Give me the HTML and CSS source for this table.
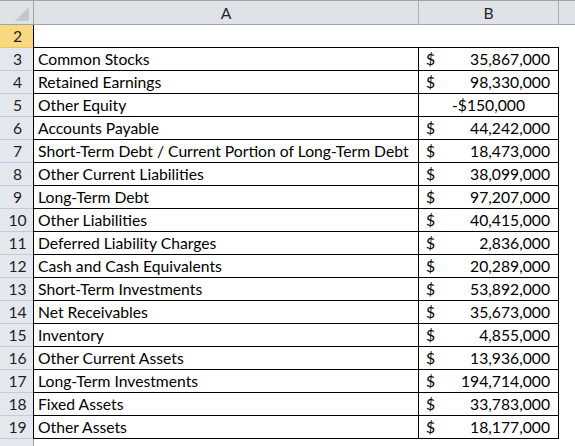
FILE: index.html
```html
<!DOCTYPE html>
<html>
<head>
<meta charset="utf-8">
<link rel="stylesheet" href="styles.css">
</head>
<body>
<div class="sheet">
  <div class="row hdr-row">
    <div class="rh corner"><span class="tri"></span></div>
    <div class="ch colA">A</div>
    <div class="ch colB">B</div>
    <div class="ch colC"></div>
  </div>
  <div class="row r2">
    <div class="rh sel">2</div>
    <div class="c colA top"></div>
    <div class="c colB top"></div>
    <div class="c colC"></div>
  </div>
  <div class="row"><div class="rh">3</div><div class="c colA t">Common Stocks</div><div class="c colB t acc"><span>$</span><span>35,867,000</span></div><div class="c colC"></div></div>
  <div class="row"><div class="rh">4</div><div class="c colA t">Retained Earnings</div><div class="c colB t acc"><span>$</span><span>98,330,000</span></div><div class="c colC"></div></div>
  <div class="row"><div class="rh">5</div><div class="c colA t">Other Equity</div><div class="c colB t ctr">-$150,000</div><div class="c colC"></div></div>
  <div class="row"><div class="rh">6</div><div class="c colA t">Accounts Payable</div><div class="c colB t acc"><span>$</span><span>44,242,000</span></div><div class="c colC"></div></div>
  <div class="row"><div class="rh">7</div><div class="c colA t">Short-Term Debt / Current Portion of Long-Term Debt</div><div class="c colB t acc"><span>$</span><span>18,473,000</span></div><div class="c colC"></div></div>
  <div class="row"><div class="rh">8</div><div class="c colA t">Other Current Liabilities</div><div class="c colB t acc"><span>$</span><span>38,099,000</span></div><div class="c colC"></div></div>
  <div class="row"><div class="rh">9</div><div class="c colA t">Long-Term Debt</div><div class="c colB t acc"><span>$</span><span>97,207,000</span></div><div class="c colC"></div></div>
  <div class="row"><div class="rh">10</div><div class="c colA t">Other Liabilities</div><div class="c colB t acc"><span>$</span><span>40,415,000</span></div><div class="c colC"></div></div>
  <div class="row"><div class="rh">11</div><div class="c colA t">Deferred Liability Charges</div><div class="c colB t acc"><span>$</span><span>2,836,000</span></div><div class="c colC"></div></div>
  <div class="row"><div class="rh">12</div><div class="c colA t">Cash and Cash Equivalents</div><div class="c colB t acc"><span>$</span><span>20,289,000</span></div><div class="c colC"></div></div>
  <div class="row"><div class="rh">13</div><div class="c colA t">Short-Term Investments</div><div class="c colB t acc"><span>$</span><span>53,892,000</span></div><div class="c colC"></div></div>
  <div class="row"><div class="rh">14</div><div class="c colA t">Net Receivables</div><div class="c colB t acc"><span>$</span><span>35,673,000</span></div><div class="c colC"></div></div>
  <div class="row"><div class="rh">15</div><div class="c colA t">Inventory</div><div class="c colB t acc"><span>$</span><span>4,855,000</span></div><div class="c colC"></div></div>
  <div class="row"><div class="rh">16</div><div class="c colA t">Other Current Assets</div><div class="c colB t acc"><span>$</span><span>13,936,000</span></div><div class="c colC"></div></div>
  <div class="row"><div class="rh">17</div><div class="c colA t">Long-Term Investments</div><div class="c colB t acc"><span>$</span><span>194,714,000</span></div><div class="c colC"></div></div>
  <div class="row"><div class="rh">18</div><div class="c colA t">Fixed Assets</div><div class="c colB t acc"><span>$</span><span>33,783,000</span></div><div class="c colC"></div></div>
  <div class="row"><div class="rh">19</div><div class="c colA t">Other Assets</div><div class="c colB t acc"><span>$</span><span>18,177,000</span></div><div class="c colC"></div></div>
  <div class="row"><div class="rh"></div><div class="c colA"></div><div class="c colB"></div><div class="c colC"></div></div>
</div>
</body>
</html>
```
FILE: styles.css
```css
html, body {
  margin: 0;
  padding: 0;
  background: #ffffff;
  overflow: hidden;
}
.sheet {
  width: 575px;
  height: 446px;
  overflow: hidden;
  font-family: Lato, "Open Sans", sans-serif;
  font-size: 15.7px;
  color: #000;
}
.row {
  display: grid;
  grid-template-columns: 34px 385px 140px 60px;
  height: 23px;
}
.hdr-row {
  height: 25px;
  border-top: 1px solid #9ea4ab;
  box-sizing: border-box;
}
.rh {
  background: #e4e8ee;
  border-right: 1px solid #9ea4ab;
  border-bottom: 1px solid #c5cbd2;
  color: #1f1f1f;
  display: flex;
  align-items: center;
  justify-content: center;
  padding-left: 2px;
  box-sizing: border-box;
}
.corner {
  position: relative;
  background: #dfe3e8;
  border-bottom: 1px solid #9ea4ab;
}
.tri {
  position: absolute;
  right: 4px;
  bottom: 3px;
  width: 0;
  height: 0;
  border-left: 14px solid transparent;
  border-bottom: 14px solid #c3c8ce;
}
.sel {
  background: #f9d87f;
  border-bottom: 1px solid #f2c25c;
}
.ch {
  background: #dfe3e8;
  border-right: 1px solid #a9afb6;
  border-bottom: 1px solid #9ea4ab;
  display: flex;
  align-items: center;
  justify-content: center;
  color: #262626;
}
.c {
  box-sizing: border-box;
  display: flex;
  align-items: center;
  white-space: nowrap;
  overflow: hidden;
}
.top {
  border-bottom: 1px solid #000;
}
.t {
  border-bottom: 1px solid #000;
}
.colA.t, .colA.top {
  border-left: 1px solid #000;
  margin-left: -1px;
}
.colA.t {
  padding-left: 4px;
}
.colB.t {
  border-left: 1px solid #000;
  border-right: 1px solid #000;
  margin-left: -1px;
}
.acc {
  justify-content: space-between;
  padding: 0 8px 0 7px;
}
.ctr {
  justify-content: center;
}
```
